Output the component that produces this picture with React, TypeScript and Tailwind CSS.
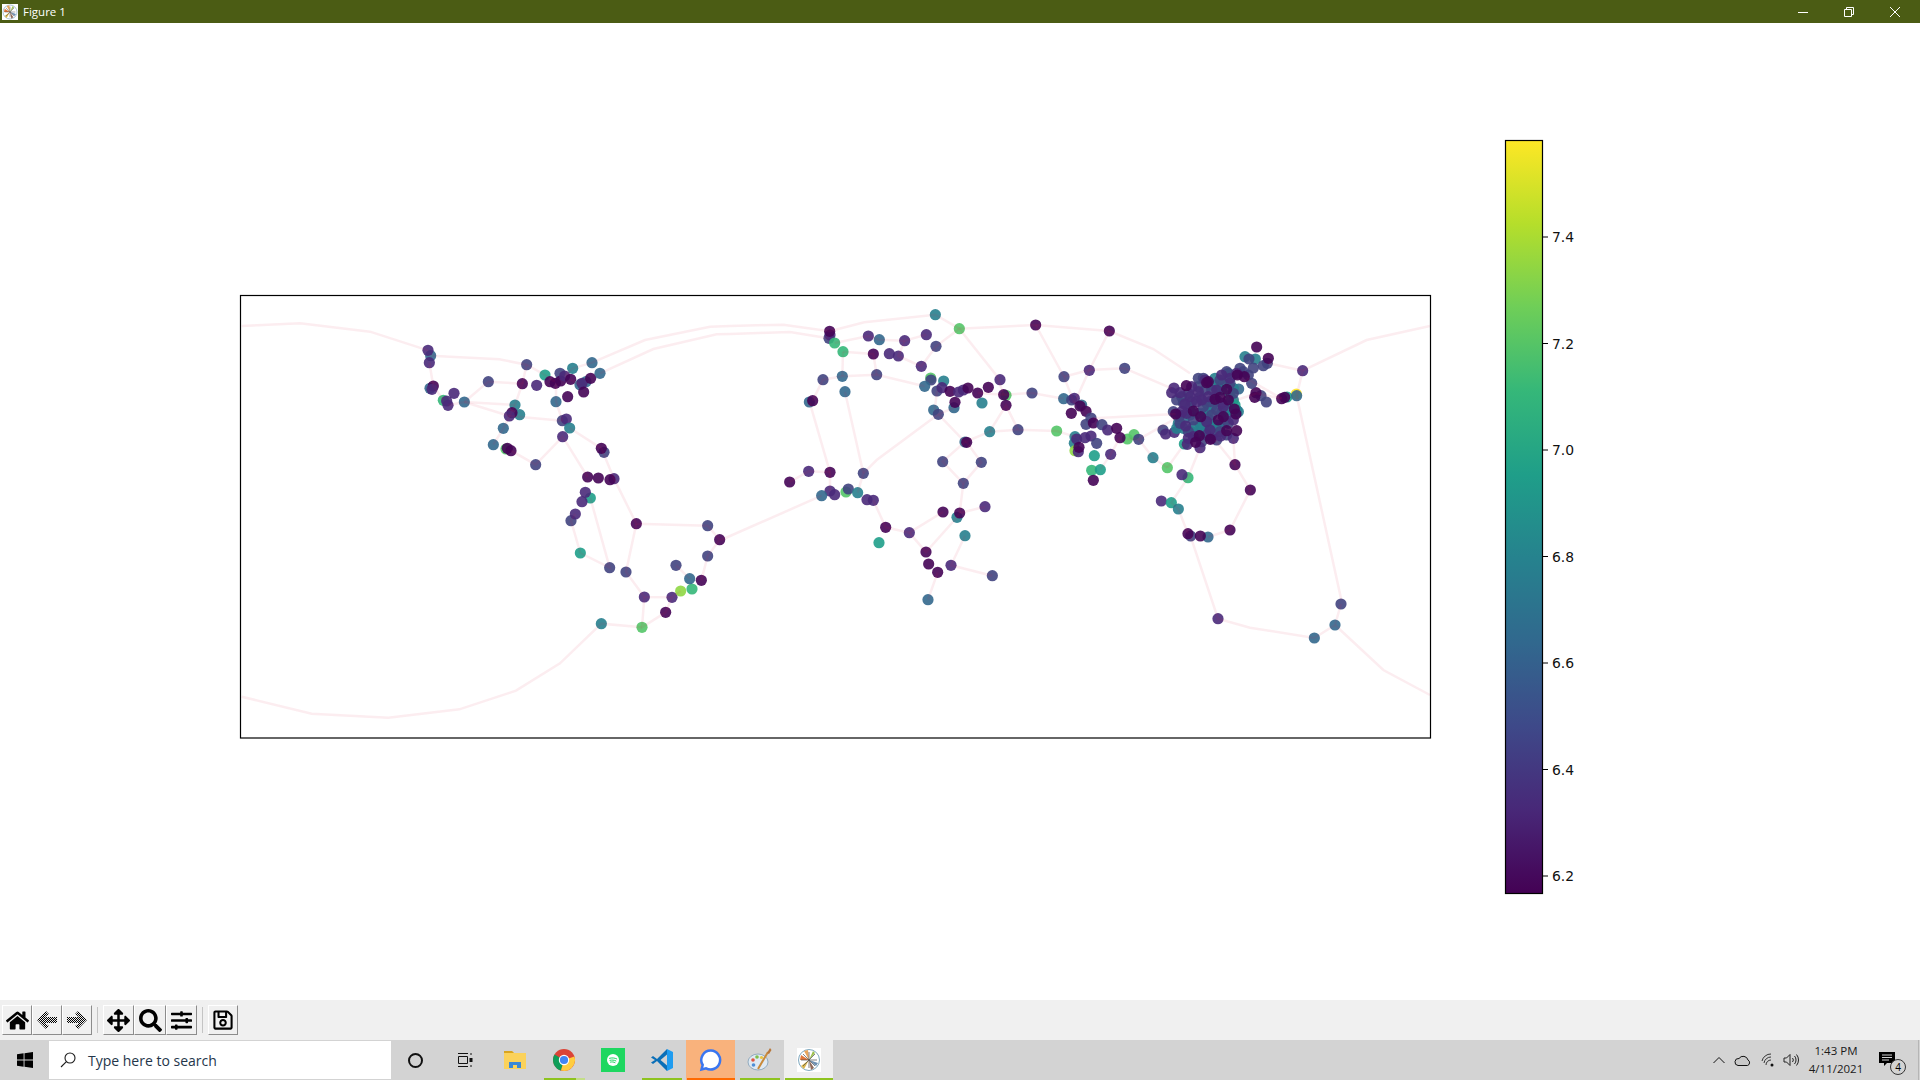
import { FaArrowsAlt, FaHome, FaRegSave, FaSearch, FaSlidersH } from "react-icons/fa";

const COLORS: Record<string, string> = {
  d: "#450457",
  p: "#4a2a7a",
  i: "#41447f",
  b: "#33688d",
  t: "#27808e",
  e: "#1f9e89",
  g: "#35b779",
  l: "#54c568",
  y: "#8fd744",
  w: "#fde725",
};

// points are read off crops of the picture, so each group has its own origin
const toPoints = (ox: number, oy: number, data: string) =>
  data
    .trim()
    .split(/\s+/)
    .map((item) => {
      const [x, y, c] = item.split(",");
      return { x: ox + Number(x) / 3, y: oy + Number(y) / 3, c };
    });

const points = [
  ...toPoints(
    230,
    280,
    `602,227,b 594,211,p 598,248,p 600,325,b 610,318,d 606,328,p 640,361,g 650,363,p 654,376,p 672,340,p 703,366,b
    775,305,i 877,311,d 890,254,i 920,316,p 945,285,e 960,305,d 976,310,d 990,280,i 992,303,d 1004,288,p 1022,298,d
    1028,265,t 1050,314,b 1068,305,b 1056,310,p 1082,295,d 1086,248,b 1110,280,b 1061,336,d 1013,350,d 978,365,b
    855,375,t 869,404,t 846,398,d 838,408,p 820,445,b 790,494,b 828,507,l 832,505,d 843,512,d 917,554,i 997,422,i
    1009,417,p 1019,444,t 998,470,p 1122,517,i 1114,505,d 1073,591,d 1105,594,d 1152,596,p 1140,599,d 1081,654,e
    1066,637,p 1056,665,p 1023,722,i 1036,702,p 1051,819,e 1139,863,i 1188,876,i 1219,731,d 1243,951,p 1236,1042,l
    1114,1031,t 1307,997,d 1326,952,p 1352,933,y 1386,927,g 1379,896,b 1414,901,d 1338,856,i 1433,828,i 1433,737,i 1469,779,d`,
  ),
  ...toPoints(
    720,
    290,
    `646,74,t 718,116,l 947,105,d 1168,123,d 327,145,i 330,135,p 329,124,d 344,159,g 369,185,g 445,138,p 478,149,b
    554,152,p 619,134,p 648,169,i 460,192,d 508,191,p 535,198,p 604,229,p 632,264,l 633,270,i 671,273,t 614,289,b
    651,303,i 666,293,p 690,304,d 716,306,p 730,300,p 744,294,d 773,309,d 805,292,d 840,269,p 858,316,l 851,314,d
    858,346,d 702,353,b 705,337,d 786,339,t 641,360,b 655,373,i 809,425,t 894,419,i 936,309,i 1010,423,l 735,456,b
    740,457,d 668,515,i 784,517,i 730,580,i 309,269,i 367,259,b 470,254,i 375,305,b 268,336,b 278,332,d 330,547,d
    266,544,p 209,576,d 430,550,i 378,606,l 385,597,i 413,608,t 330,603,p 344,614,p 305,617,b 441,629,p 460,631,p
    669,666,d 711,682,t 719,669,d 795,650,p 497,712,d 568,728,p 477,758,e 735,737,t 618,786,d 626,822,d 693,826,p
    653,847,d 817,857,i 624,929,b`,
  ),
  ...toPoints(
    1030,
    300,
    `102,230,i 178,211,p 284,205,i 101,296,b 155,315,b 125,300,i 133,295,p 150,318,d 168,334,d 124,340,d 183,354,i
    168,373,i 190,369,d 216,374,i 233,390,p 260,385,d 292,417,l 312,404,l 326,418,i 270,413,d 135,410,t 133,430,t
    140,417,p 165,413,p 183,408,p 200,430,i 135,452,y 145,455,p 147,442,d 193,467,e 242,463,p 185,511,g 211,509,e
    190,541,d 369,473,t 412,503,l 474,533,g 456,524,p 394,603,p 424,608,e 445,627,t 482,708,i 474,701,d 534,711,b
    511,708,d 600,690,d 661,570,d 615,494,d 818,212,p 799,282,w 771,291,e 800,287,b 764,292,d 755,296,d 680,141,d
    645,170,t 676,177,t 657,177,i 712,190,i 700,197,i 715,175,d 670,204,i 626,267,b 693,287,i 709,306,i 678,278,d
    674,292,d 399,390,i 407,402,p 433,397,p
    555,235,t 595,220,t 565,265,e 610,300,t 620,330,t 535,335,t 515,380,t 445,370,t 463,432,e 520,340,t 560,300,e
    490,380,t 575,270,t 510,375,t 445,350,b 625,335,t 555,390,b 600,310,b 570,380,b 465,355,b 540,360,b 480,320,b
    530,310,b 590,345,b 500,405,b 580,250,t 550,255,t 610,265,t 600,285,e 615,315,e 540,375,t 525,395,t 485,395,t
    460,385,t 440,385,t 505,340,b 575,335,b 545,320,t 595,330,t 525,355,t 560,375,t 585,365,b 480,345,t
    440,300,i 505,260,i 545,270,i 600,250,i 640,215,i 590,215,i 570,240,i 520,320,i 560,330,i 490,360,i 595,370,i
    530,405,i 450,370,i 525,270,i 475,280,i 610,280,i 460,310,i 505,235,i 520,235,i 630,205,i 655,225,i 665,250,i
    455,290,i 485,305,i 540,305,i 575,310,i 475,395,i 515,425,i 560,420,i 590,405,i 430,335,i 450,345,i
    545,345,i 510,290,i 570,395,i
    432,264,p 450,278,p 425,278,p 480,290,p 600,235,p 620,220,p 505,275,p 535,290,p 465,312,p 470,340,p 467,378,p
    530,365,p 580,320,p 610,415,p 572,408,p 472,433,p 510,443,p 490,410,p 475,415,p 540,390,p 500,305,p
    515,300,p 455,335,p 560,270,p 610,360,p 525,240,p 575,225,p 545,415,p 485,260,p
    469,257,d 535,245,d 530,248,d 590,268,d 643,230,d 622,225,d 570,292,d 595,300,d 555,298,d 490,333,d 437,342,d
    512,350,d 613,327,d 618,342,d 565,360,d 580,350,d 590,392,d 620,392,d 508,407,d 497,427,d 541,418,d`,
  ),
  ...toPoints(1130, 480, "264,416,p 553,474,b 615,435,b 633,372,i"),
];

const toLines = (ox: number, oy: number, lines: string[]) =>
  lines.map((line) =>
    line
      .trim()
      .split(/\s+/)
      .map((p) => {
        const [x, y] = p.split(",");
        return `${ox + Number(x) / 3},${oy + Number(y) / 3}`;
      })
      .join(" "),
  );

const edges = [
  ...toLines(230, 280, [
    "35,138 210,130 420,155 594,211",
    "602,227 808,238 890,254 945,285 975,305",
    "598,248 610,318 640,361",
    "654,376 703,366 775,305 877,311 855,375 820,445 790,494",
    "703,366 855,375",
    "703,366 838,408 997,422",
    "843,512 917,554 998,470 1073,591",
    "1019,444 1114,505 1152,596 1219,731 1433,737 1469,779 1433,828 1414,901",
    "1219,731 1188,876 1243,951 1326,952 1352,933",
    "1243,951 1236,1042 1307,997 1326,952",
    "1236,1042 1114,1031 990,1150 858,1232 688,1288 475,1313 245,1301 35,1250",
    "1338,856 1379,896",
    "1036,702 1023,722 1051,819 1139,863 1081,654",
    "890,254 877,311",
    "1028,265 1086,248 1245,180 1440,140 1500,138",
    "1110,280 1270,207 1460,163 1500,162",
    "978,310 978,365 997,422",
    "1022,298 1050,314",
    "1028,265 1004,288",
  ]),
  ...toLines(720, 290, [
    "30,108 190,104 329,124 433,97 646,74 718,116 947,105 1168,123 1300,177 1410,250",
    "30,132 210,126 325,145",
    "344,159 445,138 478,149 554,152 619,134",
    "554,152 535,198 604,229 648,169 718,116 830,257 851,314",
    "369,185 460,192 470,254",
    "369,185 367,259",
    "278,332 309,269 367,259 470,254 614,289",
    "270,340 330,547 330,603",
    "375,305 430,550 413,608",
    "430,550 470,510 655,373",
    "209,576 266,544 330,547",
    "305,617 3,750",
    "460,631 497,712 568,728 669,666",
    "568,728 618,786 711,682 719,669 795,650",
    "735,737 693,826 817,857",
    "653,847 624,929",
    "730,580 719,669",
    "655,373 735,456 668,515 730,580 784,517 740,457",
    "735,456 809,425 894,419 1010,423 1065,440",
    "809,425 858,346 894,419",
    "851,314 936,309 1031,326",
    "651,303 644,360",
    "655,373 702,353",
    "773,309 851,314",
    "947,105 1032,260 1063,340",
    "1168,123 1108,240 1063,340",
    "1032,260 1108,240 1214,235",
  ]),
  ...toLines(1030, 300, [
    "284,205 425,265",
    "190,355 437,342",
    "326,418 437,355",
    "326,418 369,473 412,503",
    "326,418 292,417",
    "270,413 242,463 211,509",
    "463,432 412,503",
    "510,443 474,533 424,608 445,627 474,701",
    "555,420 615,494 661,570 600,690 534,711",
    "610,415 615,494",
    "650,235 755,296",
    "620,300 680,280 755,296",
    "715,190 818,212 800,287",
    "818,212 1010,120 1200,78",
    "800,287 934,900",
  ]),
  ...toLines(1130, 480, [
    "182,170 264,416 360,443 553,474 615,435 633,372",
    "615,435 760,570 900,645",
  ]),
];

const ticks = [
  { label: "7.4", y: 237 },
  { label: "7.2", y: 343.5 },
  { label: "7.0", y: 450 },
  { label: "6.8", y: 556.5 },
  { label: "6.6", y: 663 },
  { label: "6.4", y: 769.5 },
  { label: "6.2", y: 876 },
];

const viridis = ["#440154", "#482878", "#3e4989", "#31688e", "#26828e", "#1f9e89", "#35b779", "#6ece58", "#b5de2b", "#fde725"];

const Figure = () => (
  <svg viewBox="0 23 1920 977" className="block h-[977px] w-[1920px]">
    <defs>
      <linearGradient id="viridis" x1="0" y1="1" x2="0" y2="0">
        {viridis.map((color, i) => (
          <stop key={color} offset={i / 9} stopColor={color} />
        ))}
      </linearGradient>
    </defs>

    <g className="blur-[0.35px]">
      {points.map((p, i) => (
        <circle key={i} cx={p.x} cy={p.y} r={5.6} fill={COLORS[p.c]} fillOpacity={0.9} />
      ))}
      {edges.map((line, i) => (
        <polyline key={i} points={line} fill="none" stroke="#dc143c" strokeOpacity={0.08} strokeWidth={2.5} />
      ))}
    </g>
    <rect x={240.5} y={295.5} width={1190} height={442.5} fill="none" stroke="#000" strokeWidth={1.2} />

    <rect x={1505.5} y={140.5} width={37} height={753} fill="url(#viridis)" stroke="#000" strokeWidth={1.2} />
    {ticks.map((t) => (
      <g key={t.label}>
        <line x1={1543} x2={1548} y1={t.y} y2={t.y} stroke="#000" strokeWidth={1} />
        <text x={1552} y={t.y + 5} fontFamily="DejaVu Sans, sans-serif" fontSize={13.9} fill="#111">
          {t.label}
        </text>
      </g>
    ))}
  </svg>
);

const MplLogo = ({ size }: { size: number }) => (
  <svg viewBox="0 0 24 24" width={size} height={size}>
    <rect width="24" height="24" fill="#fff" />
    <circle cx="12" cy="12" r="10.5" fill="none" stroke="#7fa9bf" strokeWidth="1" />
    <path d="M12 12 4 7 3 12Z" fill="#e0763a" />
    <path d="M12 12 7 3 11 2Z" fill="#e9a55c" />
    <path d="M12 12 16 3 18 5Z" fill="#9cc04e" />
    <path d="M12 12 21 15 19 18Z" fill="#6d8fb0" />
    <path d="M12 12 7 21 4 18Z" fill="#d9b64c" />
    <path d="M12 12 14 22 17 20Z" fill="#8f6a5a" />
    <path d="M12 4V20M4 12H20M6 6 18 18M18 6 6 18" stroke="#4c4c4c" strokeWidth="0.7" />
  </svg>
);

const TitleBar = () => (
  <div className="flex h-[23px] items-center bg-[#4b5c14] text-white">
    <div className="ml-[2px] flex h-4 w-4 items-center justify-center">
      <MplLogo size={16} />
    </div>
    <span className="ml-[5px] font-['Open_Sans',sans-serif] text-[11.5px]">Figure 1</span>
    <div className="mr-[2px] ml-auto flex items-center">
      <div className="flex w-[46px] justify-center">
        <svg width="10" height="10" viewBox="0 0 10 10" stroke="#fff">
          <path d="M0 5.5H10" />
        </svg>
      </div>
      <div className="flex w-[46px] justify-center">
        <svg width="10" height="10" viewBox="0 0 10 10" fill="none" stroke="#fff">
          <path d="M.5 2.5H7.5V9.5H.5ZM2.5 2.5V.5H9.5V7.5H7.5" />
        </svg>
      </div>
      <div className="flex w-[46px] justify-center">
        <svg width="10" height="10" viewBox="0 0 10 10" stroke="#fff">
          <path d="M0 0 10 10M10 0 0 10" />
        </svg>
      </div>
    </div>
  </div>
);

const ToolButton = ({ children, className = "w-[30px]" }: { children: React.ReactNode; className?: string }) => (
  <div className={`flex h-[30px] items-center justify-center border border-t-white border-r-[#8c8c8c] border-b-[#8c8c8c] border-l-white text-black ${className}`}>
    {children}
  </div>
);

const Separator = () => <div className="mx-[5px] h-[26px] w-px bg-[#c4c4c4]" />;

const DitherArrow = ({ flip }: { flip?: boolean }) => (
  <svg width="22" height="22" viewBox="0 0 22 22" className={flip ? "-scale-x-100" : ""}>
    <defs>
      <pattern id={flip ? "dither-r" : "dither-l"} width="2" height="2" patternUnits="userSpaceOnUse">
        <rect width="1" height="1" fill="#000" />
        <rect x="1" y="1" width="1" height="1" fill="#000" />
      </pattern>
    </defs>
    <path d="M1 11 10 2 13 5 9 8H21V14H9L13 17 10 20Z" fill={`url(#${flip ? "dither-r" : "dither-l"})`} />
  </svg>
);

const Toolbar = () => (
  <div className="flex h-10 items-center bg-[#f0f0f0] pl-[2px]">
    <ToolButton>
      <FaHome size={23} />
    </ToolButton>
    <ToolButton>
      <DitherArrow />
    </ToolButton>
    <ToolButton>
      <DitherArrow flip />
    </ToolButton>
    <Separator />
    <ToolButton className="w-[31px]">
      <FaArrowsAlt size={23} />
    </ToolButton>
    <ToolButton className="w-[32px]">
      <FaSearch size={23} />
    </ToolButton>
    <ToolButton className="w-[31px]">
      <FaSlidersH size={21} />
    </ToolButton>
    <Separator />
    <ToolButton>
      <FaRegSave size={22} />
    </ToolButton>
  </div>
);

const TaskSlot = ({ children, className = "" }: { children: React.ReactNode; className?: string }) => (
  <div className={`relative flex h-10 w-[49px] items-center justify-center ${className}`}>{children}</div>
);

const Taskbar = () => (
  <div className="flex h-10 items-stretch bg-[#d3d3d3]">
    <div className="flex w-[49px] items-center justify-center">
      <svg width="16" height="16" viewBox="0 0 16 16" fill="#000">
        <path d="M0 2.300 6.600 1.300V7.500H0ZM7.500 1.200 16 0V7.500H7.500ZM0 8.500H6.600V14.700L0 13.700ZM7.500 8.500H16V16L7.500 14.800Z" />
      </svg>
    </div>
    <div className="my-[1px] flex w-[342px] items-center bg-white pl-[11px]">
      <svg width="16" height="16" viewBox="0 0 16 16" fill="none" stroke="#1c1c1c" strokeWidth="1.100">
        <circle cx="10" cy="6" r="5" />
        <path d="M6.400 9.600 1 15" />
      </svg>
      <span className="ml-[12px] font-['Open_Sans',sans-serif] text-[14px] text-[#24364a]">Type here to search</span>
    </div>
    <div className="flex w-[49px] items-center justify-center">
      <div className="h-[15px] w-[15px] rounded-full border-2 border-[#111]" />
    </div>
    <div className="flex w-[50px] items-center justify-center">
      <svg width="16" height="16" viewBox="0 0 16 16" fill="none" stroke="#111">
        <path d="M1 1.500H11M1 14.500H11M1.500 4.500H10.500V11.500H1.500ZM14 1V3M14 13V15" />
        <rect x="12.500" y="6" width="3" height="4" fill="#111" stroke="none" />
      </svg>
    </div>
    <TaskSlot>
      <svg width="24" height="24" viewBox="0 0 24 24">
        <path d="M1 3H9L11 5H23V21H1Z" fill="#fbd25b" />
        <path d="M1 3H9L11 5H1Z" fill="#d9a520" />
        <path d="M6 20V14H18V20H14V17H10V20Z" fill="#3b88d6" />
      </svg>
    </TaskSlot>
    <TaskSlot>
      <svg width="24" height="24" viewBox="0 0 24 24">
        <circle cx="12" cy="12" r="11" fill="#db4437" />
        <path d="M12 12 2.500 6.500A11 11 0 0 0 9 22.600Z" fill="#0f9d58" />
        <path d="M12 12 22.400 8.500A11 11 0 0 1 9 22.600Z" fill="#ffcd40" />
        <circle cx="12" cy="12" r="5.200" fill="#fff" />
        <circle cx="12" cy="12" r="4.100" fill="#4285f4" />
      </svg>
      <div className="absolute right-[3px] bottom-0 left-[5px] flex h-[2px]">
        <div className="w-8 bg-[#8ec31f]" />
        <div className="flex-1 bg-[#c3de87]" />
      </div>
    </TaskSlot>
    <TaskSlot>
      <svg width="24" height="24" viewBox="0 0 24 24">
        <rect width="24" height="24" fill="#1ed760" />
        <circle cx="12" cy="12" r="6" fill="#fff" />
        <path d="M8.500 10.300C11 9.600 13.500 9.800 15.800 10.900M9 12.300C11 11.800 13 12 14.900 12.900M9.500 14.100C11 13.700 12.600 13.900 14 14.600" fill="none" stroke="#1ed760" strokeWidth="1" strokeLinecap="round" />
      </svg>
    </TaskSlot>
    <TaskSlot>
      <svg width="24" height="24" viewBox="0 0 24 24">
        <path d="M17 1 23 4V20L17 23Z" fill="#1f9cf0" />
        <path d="M17 1 7 11 3 8 1 9.500 5 12 1 14.500 3 16 7 13 17 23 17 17.500 10.500 12 17 6.500Z" fill="#0a6fb8" />
      </svg>
      <div className="absolute right-[4px] bottom-0 left-[5px] h-[2px] bg-[#8ec31f]" />
    </TaskSlot>
    <TaskSlot className="bg-[#f9b27c] pl-[1px]">
      <svg width="24" height="24" viewBox="0 0 24 24">
        <path d="M12 2.500A9.500 9.500 0 1 1 7 20.300L2.500 21.500 3.700 17A9.500 9.500 0 0 1 12 2.500Z" fill="#fff" stroke="#3a76f0" strokeWidth="2.500" />
      </svg>
      <div className="absolute right-0 bottom-0 left-[1px] h-[2px] bg-[#ff6a00]" />
    </TaskSlot>
    <TaskSlot>
      <svg width="26" height="26" viewBox="0 0 26 26">
        <ellipse cx="11" cy="15" rx="10" ry="8" fill="#dfe9f2" stroke="#7f9db5" strokeWidth="0.800" />
        <circle cx="6" cy="13" r="1.800" fill="#e0563f" />
        <circle cx="10" cy="10" r="1.800" fill="#7fbf4d" />
        <circle cx="14.500" cy="10.500" r="1.600" fill="#e9c53f" />
        <circle cx="6.500" cy="18" r="1.800" fill="#4f8fd6" />
        <path d="M11 22 21 5" stroke="#c98a3a" strokeWidth="2" />
        <path d="M20 6 23 1 24.500 3 22 7Z" fill="#b9773a" />
      </svg>
      <div className="absolute right-[4px] bottom-0 left-[5px] h-[2px] bg-[#8ec31f]" />
    </TaskSlot>
    <TaskSlot className="bg-[#efefef]">
      <MplLogo size={24} />
      <div className="absolute right-0 bottom-0 left-[1px] h-[2px] bg-[#8ec31f]" />
    </TaskSlot>

    <div className="ml-auto flex items-center">
      <svg width="12" height="8" viewBox="0 0 12 8" fill="none" stroke="#111" className="mr-[9px]">
        <path d="M.5 7 6 1.500 11.500 7" />
      </svg>
      <svg width="17" height="11" viewBox="0 0 17 11" className="mr-[10px]" fill="#c9c9c9" stroke="#111" strokeWidth="1">
        <path d="M4 10.500H13.500A3 3 0 0 0 14 5 5 5 0 0 0 5 3.500 3.500 3.500 0 0 0 4 10.500Z" />
      </svg>
      <svg width="14" height="14" viewBox="0 0 14 14" fill="none" stroke="#222" strokeWidth="0.900" className="mr-[8px]">
        <path d="M1 8A9 9 0 0 1 10 1M3 10A7 7 0 0 1 10 4M5 12A5 5 0 0 1 10 7" />
        <circle cx="11" cy="12" r="1.500" fill="#111" stroke="none" />
      </svg>
      <svg width="16" height="14" viewBox="0 0 16 14" fill="none" stroke="#222" strokeWidth="1" className="mr-[8px]">
        <path d="M1 5H3.500L7 1.500V12.500L3.500 9H1ZM9.500 5A3 3 0 0 1 9.500 9M11.500 3A6 6 0 0 1 11.500 11M13.500 1.500A8.500 8.500 0 0 1 13.500 12.500" />
      </svg>
      <div className="flex w-[58px] flex-col items-center font-['Open_Sans',sans-serif] text-[11.5px] leading-[18px] text-[#1a1a1a]">
        <span>1:43 PM</span>
        <span>4/11/2021</span>
      </div>
      <div className="relative mr-[23px] ml-[14px] h-[16px] w-[16px]">
        <svg width="16" height="14" viewBox="0 0 16 14" fill="#000">
          <path d="M0 0H16V11H8L5 14V11H0Z" />
          <path d="M3 3H13M3 5.500H13M3 8H10" stroke="#d3d3d3" />
        </svg>
        <div className="absolute -right-[11px] -bottom-[7px] flex h-[16px] w-[16px] items-center justify-center rounded-full border border-[#333] bg-[#d3d3d3] font-['Open_Sans',sans-serif] text-[10px] text-black">
          4
        </div>
      </div>
      <div className="h-10 w-px bg-[#b5b5b5]" />
      <div className="w-[1px]" />
    </div>
  </div>
);

export default function App() {
  return (
    <div className="flex h-[1080px] w-[1920px] flex-col overflow-hidden bg-white">
      <TitleBar />
      <Figure />
      <Toolbar />
      <Taskbar />
    </div>
  );
}
